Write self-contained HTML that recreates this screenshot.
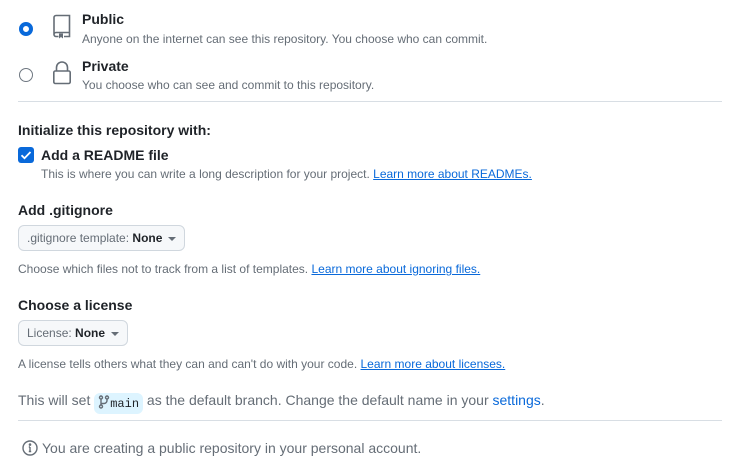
<!DOCTYPE html>
<html><head><meta charset="utf-8"><style>
*{margin:0;padding:0;box-sizing:border-box}
body{width:744px;height:472px;background:#fff;position:relative;overflow:hidden;font-family:"Liberation Sans",sans-serif;color:#1f2328}
.a{position:absolute;white-space:nowrap}
.t{font-size:14px;font-weight:bold}
.d{font-size:12px;color:#656d76}
a{color:#0969da;text-decoration:underline}
.hr{position:absolute;left:18px;width:704px;height:1px;background:#d8dee4}
.btn{position:absolute;white-space:nowrap;height:26px;border:1px solid #d0d7de;background:#f6f8fa;border-radius:6px;font-size:12px;padding:0 8px;line-height:24px;color:#1f2328}
.btn .l{color:#656d76}
.btn .car{display:inline-block;width:0;height:0;border-left:4px solid transparent;border-right:4px solid transparent;border-top:4px solid #656d76;margin-left:6px;vertical-align:middle}
</style></head><body>
<div class="a" style="left:19px;top:22px;width:14px;height:14px;border-radius:50%;border:4px solid #0969da"></div>
<div class="a" style="left:19px;top:68px;width:14px;height:14px;border-radius:50%;border:1px solid #6e7781"></div>
<svg class="a" style="left:52px;top:14px" width="20" height="25" viewBox="0 0 20 25" fill="none" stroke="#656d76" stroke-width="1.6"><path d="M2 21V3.5A2 2 0 0 1 4 1.5h13.5v17H4A2 2 0 0 0 2 20.5 2 2 0 0 0 4 22.5h2.5M12 22.5h5.5v-4"/><path d="M7 19.5v5l2-1.5 2 1.5v-5z" fill="#656d76" stroke="none"/></svg>
<svg class="a" style="left:52px;top:61px" width="20" height="24" viewBox="0 0 20 24" fill="none" stroke="#656d76" stroke-width="1.6"><path d="M4.5 10V6.5a5.5 5.5 0 0 1 11 0V10"/><rect x="1.8" y="10" width="16.4" height="12.5" rx="1.5"/></svg>
<div class="a t" style="left:82px;top:11px">Public</div>
<div class="a d" style="left:82px;top:32px">Anyone on the internet can see this repository. You choose who can commit.</div>
<div class="a t" style="left:82px;top:58px">Private</div>
<div class="a d" style="left:82px;top:78px">You choose who can see and commit to this repository.</div>
<div class="hr" style="top:101px"></div>
<div class="a t" style="left:18px;top:122px">Initialize this repository with:</div>
<div class="a" style="left:18px;top:147px;width:16px;height:16px;background:#0969da;border-radius:3px"><svg width="16" height="16" viewBox="0 0 16 16"><path d="M3.5 8.2l3 3 6-6.2" fill="none" stroke="#fff" stroke-width="1.8"/></svg></div>
<div class="a" style="left:41px;top:147px;font-size:14px;font-weight:bold">Add a README file</div>
<div class="a d" style="left:41px;top:167px">This is where you can write a long description for your project. <a>Learn more about READMEs.</a></div>
<div class="a t" style="left:18px;top:202px">Add .gitignore</div>
<div class="btn" style="left:18px;top:225px"><span class="l">.gitignore template:</span> <b>None</b><span class="car"></span></div>
<div class="a d" style="left:18px;top:262px">Choose which files not to track from a list of templates. <a>Learn more about ignoring files.</a></div>
<div class="a t" style="left:18px;top:297px">Choose a license</div>
<div class="btn" style="left:18px;top:320px"><span class="l">License:</span> <b>None</b><span class="car"></span></div>
<div class="a d" style="left:18px;top:357px">A license tells others what they can and can't do with your code. <a>Learn more about licenses.</a></div>
<div class="a" style="left:18px;top:392px;font-size:14px;color:#656d76;line-height:16px">This will set <span style="display:inline-block;background:#ddf4ff;border-radius:6px;padding:2px 4px;line-height:16px;color:#1f2328;font-family:'Liberation Mono',monospace;font-size:12px;vertical-align:-2px"><svg width="12" height="14" viewBox="0 0 12 14" style="vertical-align:-2px" fill="none" stroke="#656d76" stroke-width="1.4"><circle cx="3" cy="2.5" r="1.5"/><circle cx="3" cy="11.5" r="1.5"/><circle cx="9" cy="2.5" r="1.5"/><path d="M3 4v6M9 4v1.5a3 3 0 0 1-3 3H3"/></svg>main</span> as the default branch. Change the default name in your <span style="color:#0969da">settings</span>.</div>
<div class="hr" style="top:420px"></div>
<svg class="a" style="left:22px;top:440px" width="16" height="16" viewBox="0 0 16 16" fill="none" stroke="#656d76" stroke-width="1.4"><circle cx="8" cy="8" r="7"/><path d="M8 7v4.5M6.8 11.5h2.4M6.8 7H8" /><circle cx="8" cy="4.6" r=".6" fill="#656d76"/></svg>
<div class="a" style="left:42px;top:440px;font-size:14px;color:#656d76">You are creating a public repository in your personal account.</div>
</body></html>
